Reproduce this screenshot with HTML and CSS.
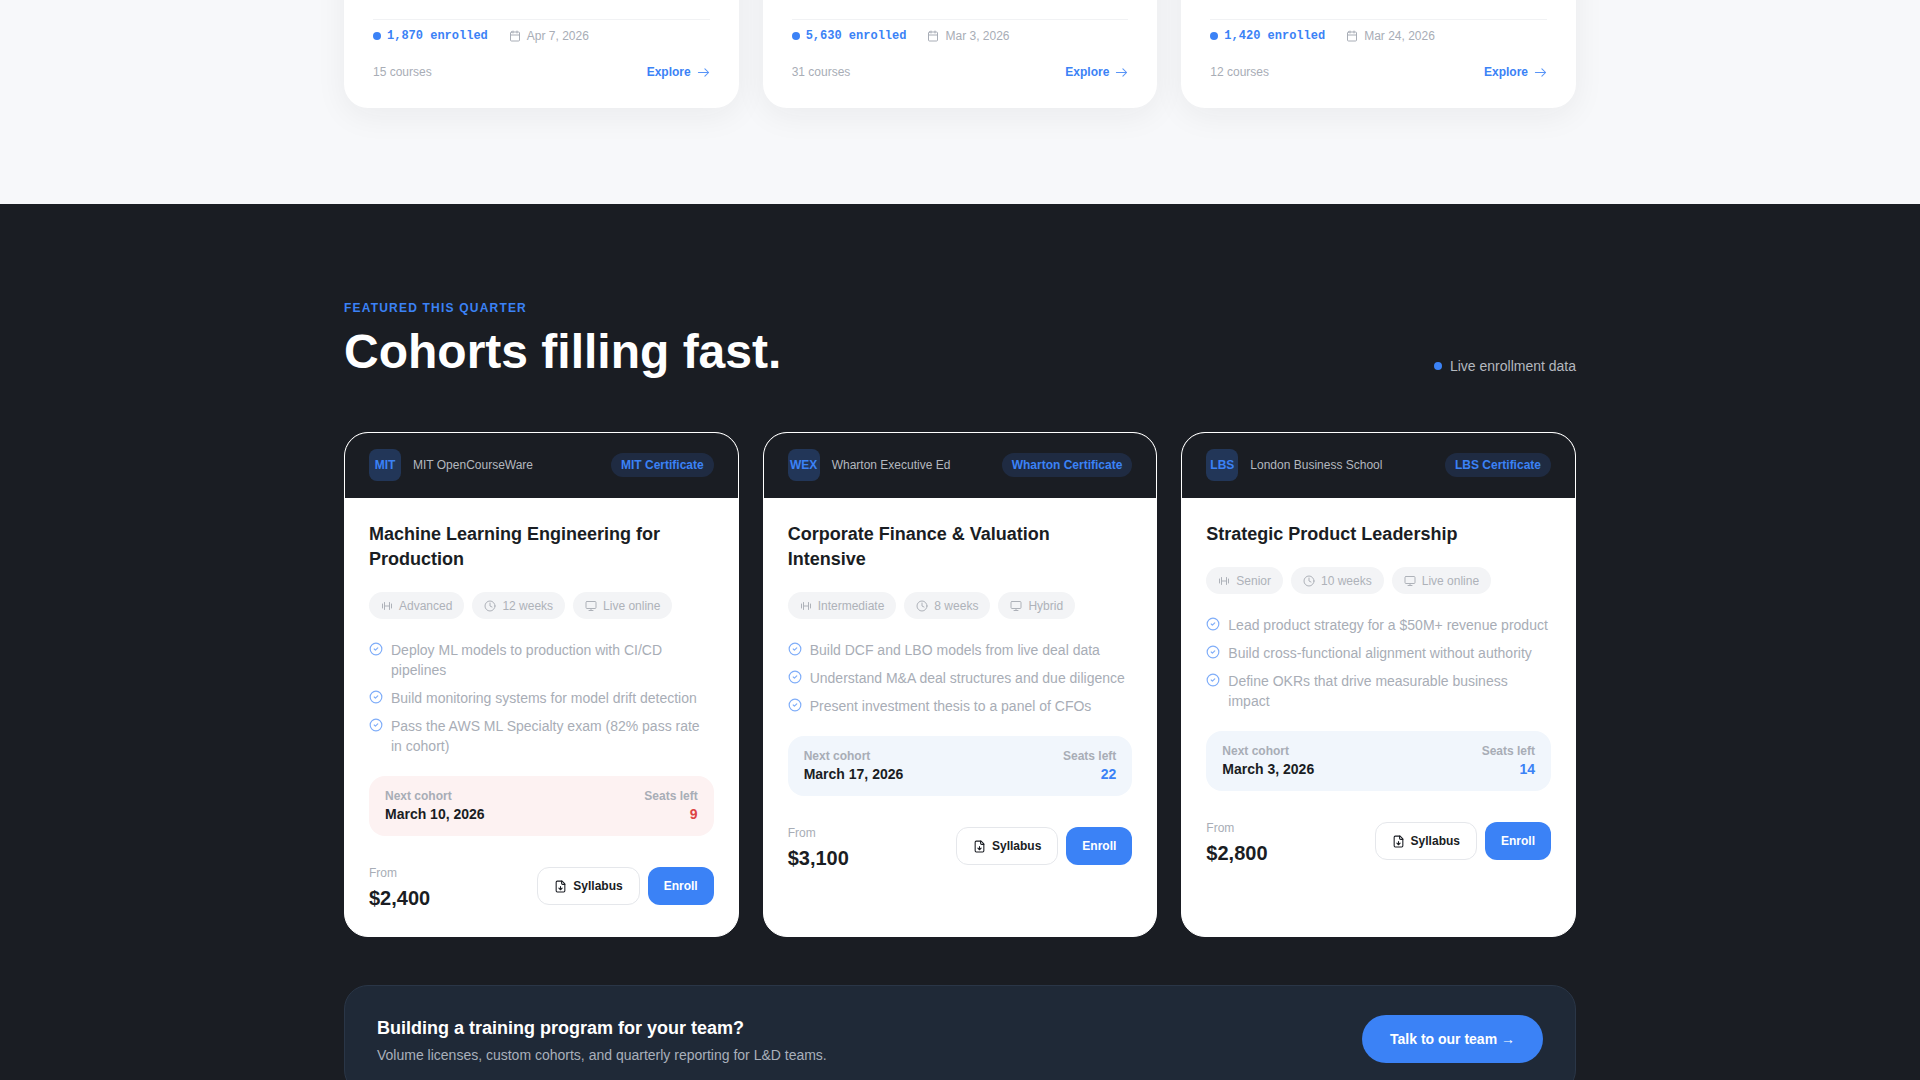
FILE: index.html
```html
<!DOCTYPE html>
<html lang="en">
<head>
<meta charset="utf-8">
<title>Cohorts filling fast</title>
<link rel="stylesheet" href="styles.css">
</head>
<body>
<svg class="defs" width="0" height="0" aria-hidden="true">
  <symbol id="i-cal" viewBox="0 0 24 24"><rect x="3" y="4" width="18" height="18" rx="2"/><path d="M16 2v4M8 2v4M3 10h18"/></symbol>
  <symbol id="i-arrow" viewBox="0 0 14 14"><path d="M1.5 7h11M8.5 3l4 4-4 4"/></symbol>
  <symbol id="i-check" viewBox="0 0 24 24"><circle cx="12" cy="12" r="10"/><path d="M9 12l2 2 4-4"/></symbol>
  <symbol id="i-clock" viewBox="0 0 24 24"><circle cx="12" cy="12" r="10"/><path d="M12 6v6l4 2"/></symbol>
  <symbol id="i-monitor" viewBox="0 0 24 24"><rect x="2" y="3" width="20" height="14" rx="2"/><path d="M8 21h8M12 17v4"/></symbol>
  <symbol id="i-level" viewBox="0 0 24 24"><path d="M7 5v14M17 5v14M3 8v8M21 8v8M7 12h10"/></symbol>
  <symbol id="i-file" viewBox="0 0 24 24"><path d="M15 2H6a2 2 0 0 0-2 2v16a2 2 0 0 0 2 2h12a2 2 0 0 0 2-2V7z"/><path d="M14 2v4a2 2 0 0 0 2 2h4M12 18v-6M9 15l3 3 3-3"/></symbol>
</svg>

<section class="catalog">
  <div class="wrap grid">
    <article class="path-card">
      <div class="path-meta">
        <span class="enrolled"><i class="dot"></i>1,870 enrolled</span>
        <span class="date"><svg class="ico i12"><use href="#i-cal"/></svg>Apr 7, 2026</span>
      </div>
      <div class="path-foot">
        <span class="count">15 courses</span>
        <a class="explore">Explore<svg class="ico i13 thin"><use href="#i-arrow"/></svg></a>
      </div>
    </article>
    <article class="path-card">
      <div class="path-meta">
        <span class="enrolled"><i class="dot"></i>5,630 enrolled</span>
        <span class="date"><svg class="ico i12"><use href="#i-cal"/></svg>Mar 3, 2026</span>
      </div>
      <div class="path-foot">
        <span class="count">31 courses</span>
        <a class="explore">Explore<svg class="ico i13 thin"><use href="#i-arrow"/></svg></a>
      </div>
    </article>
    <article class="path-card">
      <div class="path-meta">
        <span class="enrolled"><i class="dot"></i>1,420 enrolled</span>
        <span class="date"><svg class="ico i12"><use href="#i-cal"/></svg>Mar 24, 2026</span>
      </div>
      <div class="path-foot">
        <span class="count">12 courses</span>
        <a class="explore">Explore<svg class="ico i13 thin"><use href="#i-arrow"/></svg></a>
      </div>
    </article>
  </div>
</section>

<section class="featured">
  <div class="wrap">
    <header class="head">
      <div>
        <p class="eyebrow">FEATURED THIS QUARTER</p>
        <h2 class="title">Cohorts filling fast.</h2>
      </div>
      <span class="live"><i class="dot"></i>Live enrollment data</span>
    </header>

    <div class="grid cohorts">
      <article class="cohort">
        <div class="cohort-top">
          <div class="school"><span class="logo">MIT</span><span class="school-name">MIT OpenCourseWare</span></div>
          <span class="badge">MIT Certificate</span>
        </div>
        <div class="cohort-body">
          <h3 class="cohort-title">Machine Learning Engineering for Production</h3>
          <div class="tags">
            <span class="tag"><svg class="ico i12"><use href="#i-level"/></svg>Advanced</span>
            <span class="tag"><svg class="ico i12"><use href="#i-clock"/></svg>12 weeks</span>
            <span class="tag"><svg class="ico i12"><use href="#i-monitor"/></svg>Live online</span>
          </div>
          <ul class="features">
            <li><svg class="ico i14"><use href="#i-check"/></svg>Deploy ML models to production with CI/CD pipelines</li>
            <li><svg class="ico i14"><use href="#i-check"/></svg>Build monitoring systems for model drift detection</li>
            <li><svg class="ico i14"><use href="#i-check"/></svg>Pass the AWS ML Specialty exam (82% pass rate in cohort)</li>
          </ul>
          <div class="next urgent">
            <div><div class="next-label">Next cohort</div><div class="next-date">March 10, 2026</div></div>
            <div class="seats"><div class="next-label">Seats left</div><div class="seat-num">9</div></div>
          </div>
          <div class="buy">
            <div><div class="from">From</div><div class="price">$2,400</div></div>
            <div class="actions">
              <a class="btn ghost"><svg class="ico i13"><use href="#i-file"/></svg>Syllabus</a>
              <a class="btn solid">Enroll</a>
            </div>
          </div>
        </div>
      </article>

      <article class="cohort">
        <div class="cohort-top">
          <div class="school"><span class="logo">WEX</span><span class="school-name">Wharton Executive Ed</span></div>
          <span class="badge">Wharton Certificate</span>
        </div>
        <div class="cohort-body">
          <h3 class="cohort-title">Corporate Finance &amp; Valuation Intensive</h3>
          <div class="tags">
            <span class="tag"><svg class="ico i12"><use href="#i-level"/></svg>Intermediate</span>
            <span class="tag"><svg class="ico i12"><use href="#i-clock"/></svg>8 weeks</span>
            <span class="tag"><svg class="ico i12"><use href="#i-monitor"/></svg>Hybrid</span>
          </div>
          <ul class="features">
            <li><svg class="ico i14"><use href="#i-check"/></svg>Build DCF and LBO models from live deal data</li>
            <li><svg class="ico i14"><use href="#i-check"/></svg>Understand M&amp;A deal structures and due diligence</li>
            <li><svg class="ico i14"><use href="#i-check"/></svg>Present investment thesis to a panel of CFOs</li>
          </ul>
          <div class="next">
            <div><div class="next-label">Next cohort</div><div class="next-date">March 17, 2026</div></div>
            <div class="seats"><div class="next-label">Seats left</div><div class="seat-num">22</div></div>
          </div>
          <div class="buy">
            <div><div class="from">From</div><div class="price">$3,100</div></div>
            <div class="actions">
              <a class="btn ghost"><svg class="ico i13"><use href="#i-file"/></svg>Syllabus</a>
              <a class="btn solid">Enroll</a>
            </div>
          </div>
        </div>
      </article>

      <article class="cohort">
        <div class="cohort-top">
          <div class="school"><span class="logo">LBS</span><span class="school-name">London Business School</span></div>
          <span class="badge">LBS Certificate</span>
        </div>
        <div class="cohort-body">
          <h3 class="cohort-title">Strategic Product Leadership</h3>
          <div class="tags">
            <span class="tag"><svg class="ico i12"><use href="#i-level"/></svg>Senior</span>
            <span class="tag"><svg class="ico i12"><use href="#i-clock"/></svg>10 weeks</span>
            <span class="tag"><svg class="ico i12"><use href="#i-monitor"/></svg>Live online</span>
          </div>
          <ul class="features">
            <li><svg class="ico i14"><use href="#i-check"/></svg>Lead product strategy for a $50M+ revenue product</li>
            <li><svg class="ico i14"><use href="#i-check"/></svg>Build cross-functional alignment without authority</li>
            <li><svg class="ico i14"><use href="#i-check"/></svg>Define OKRs that drive measurable business impact</li>
          </ul>
          <div class="next">
            <div><div class="next-label">Next cohort</div><div class="next-date">March 3, 2026</div></div>
            <div class="seats"><div class="next-label">Seats left</div><div class="seat-num">14</div></div>
          </div>
          <div class="buy">
            <div><div class="from">From</div><div class="price">$2,800</div></div>
            <div class="actions">
              <a class="btn ghost"><svg class="ico i13"><use href="#i-file"/></svg>Syllabus</a>
              <a class="btn solid">Enroll</a>
            </div>
          </div>
        </div>
      </article>
    </div>

    <aside class="cta">
      <div>
        <h3 class="cta-title">Building a training program for your team?</h3>
        <p class="cta-sub">Volume licenses, custom cohorts, and quarterly reporting for L&amp;D teams.</p>
      </div>
      <a class="cta-btn">Talk to our team →</a>
    </aside>
  </div>
</section>
</body>
</html>
```
FILE: styles.css
```css
* { box-sizing: border-box; }
html, body { margin: 0; height: 1080px; overflow: hidden; }
body { font-family: "Liberation Sans", Arial, sans-serif; background: #f7f8fa; color: #1a1d23; }
.defs { display: block; height: 0; }
.wrap { width: 1232px; margin: 0 auto; }
.grid { display: grid; grid-template-columns: repeat(3, 1fr); gap: 24px; }
.ico { fill: none; stroke: currentColor; stroke-width: 2; stroke-linecap: round; stroke-linejoin: round; flex: none; }
.i12 { width: 12px; height: 12px; }
.i13 { width: 13px; height: 13px; }
.i14 { width: 14px; height: 14px; }
.thin { stroke-width: 1.1; opacity: .85; }
.dot { display: block; width: 8px; height: 8px; border-radius: 50%; background: #3b82f6; flex: none; }

/* catalog tail */
.catalog { height: 204px; padding-bottom: 96px; display: flex; align-items: flex-end; overflow: hidden; }
.path-card { height: 160px; padding: 0 29px 28px; background: #fff; border-radius: 24px; box-shadow: 0 8px 32px rgba(26,29,35,.06); display: flex; flex-direction: column; justify-content: flex-end; }
.path-meta { display: flex; align-items: center; gap: 21px; padding-top: 7px; border-top: 1px solid #f1f2f4; margin-bottom: 19px; }
.enrolled { display: flex; align-items: center; gap: 6px; font: 700 12px/18px "Liberation Mono", monospace; color: #3b82f6; }
.date { display: flex; align-items: center; gap: 6px; font-size: 12px; line-height: 18px; color: #a8adb6; }
.path-foot { display: flex; justify-content: space-between; align-items: center; font-size: 12px; line-height: 16px; }
.count { color: #a8adb6; }
.explore { display: flex; align-items: center; gap: 6px; font-weight: 700; color: #3b82f6; }

/* featured */
.featured { background: #1a1d23; padding-top: 96px; height: 876px; overflow: hidden; }
.head { display: flex; justify-content: space-between; align-items: flex-end; margin-bottom: 52px; }
.eyebrow { margin: 0 0 8px; font-size: 12px; line-height: 16px; font-weight: 700; letter-spacing: 1.2px; color: #3b82f6; }
.title { margin: 0; font-size: 48px; line-height: 56px; font-weight: 700; color: #fff; }
.live { display: flex; align-items: center; gap: 8px; margin-bottom: 4px; font-size: 14px; line-height: 20px; color: #b4b8bf; }

.cohorts { margin-bottom: 48px; }
.cohort { background: #fff; border: 1px solid #fff; border-radius: 24px; overflow: hidden; }
.cohort-top { padding: 16px 24px; border-bottom: 1px solid #1a1d23; background: #1a1d23; display: flex; align-items: center; justify-content: space-between; }
.school { display: flex; align-items: center; gap: 12px; }
.logo { width: 32px; height: 32px; border-radius: 8px; background: rgba(59,130,246,.25); color: #3b82f6; font-size: 12px; font-weight: 700; display: flex; align-items: center; justify-content: center; }
.school-name { font-size: 12px; color: #b4b8bf; }
.badge { padding: 4px 10px; border-radius: 999px; background: rgba(59,130,246,.15); color: #3b82f6; font-size: 12px; line-height: 16px; font-weight: 700; }
.cohort-body { padding: 24px; }
.cohort-title { margin: 0 0 20px; font-size: 18px; line-height: 25px; font-weight: 700; color: #1a1d23; }
.tags { display: flex; gap: 8px; margin-bottom: 21px; }
.tag { display: flex; align-items: center; gap: 6px; height: 27px; padding: 0 12px; border-radius: 999px; background: #f3f4f6; color: #aeb2b9; font-size: 12px; }
.features { list-style: none; margin: 0 0 20px; padding: 0; display: flex; flex-direction: column; gap: 8px; }
.features li { position: relative; padding-left: 22px; font-size: 14px; line-height: 20px; color: #a8adb6; }
.features .ico { position: absolute; left: 0; top: 2px; color: #3b82f6; opacity: .65; }
.next { display: flex; justify-content: space-between; padding: 12px 16px; border-radius: 16px; background: #f1f6fc; margin-bottom: 29px; }
.next.urgent { background: #fdf2f2; }
.next-label { font-size: 12px; line-height: 16px; font-weight: 700; color: #a8adb6; }
.next-date { font-size: 14px; line-height: 20px; font-weight: 700; color: #1a1d23; }
.seats { text-align: right; }
.seat-num { font-size: 14px; line-height: 20px; font-weight: 700; color: #3b82f6; }
.urgent .seat-num { color: #dc4444; }
.buy { display: flex; align-items: flex-start; justify-content: space-between; }
.from { font-size: 12px; line-height: 16px; color: #a8adb6; margin-bottom: 3px; }
.price { font-size: 20px; line-height: 28px; font-weight: 700; color: #1a1d23; }
.actions { display: flex; gap: 8px; padding-top: 2px; }
.btn { display: flex; align-items: center; gap: 6px; height: 38px; padding: 0 16px; border-radius: 12px; font-size: 12px; font-weight: 700; }
.ghost { border: 1px solid #e5e7eb; color: #1a1d23; background: #fff; }
.solid { background: #3b82f6; color: #fff; }

.cta { display: flex; align-items: flex-start; justify-content: space-between; padding: 29px 32px 27px; background: #1f2937; border: 1px solid #2a3647; border-radius: 24px; }
.cta-title { margin: 0 0 3px; font-size: 18px; line-height: 27px; font-weight: 700; color: #fff; }
.cta-sub { margin: 0; font-size: 14px; line-height: 21px; color: #a9b0bb; }
.cta-btn { display: flex; align-items: center; height: 48px; padding: 0 28px; border-radius: 24px; background: #3b82f6; color: #fff; font-size: 14px; font-weight: 700; }
```
